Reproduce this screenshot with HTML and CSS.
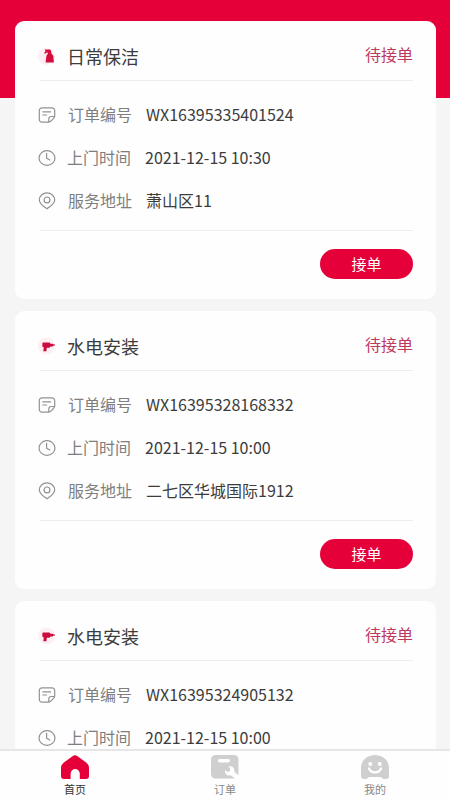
FILE: index.html
```
<!DOCTYPE html>
<html lang="zh-CN">
<head>
  <meta charset="UTF-8">
  <meta name="viewport" content="width=device-width, initial-scale=1">
  <title>首页</title>
  <link rel="stylesheet" href="styles.css">
</head>
<body>
  <!-- shared icons -->
  <svg class="sprite">
    <symbol id="icon-spray" viewBox="0 0 22 22">
      <circle cx="9.5" cy="11.5" r="8.5" fill="#fef0f2"/>
      <path d="M7.600 4.600h4.600c1.200 0 1.800.6 2 1.600l.2 2.300 1.900 2.300.6 6.600H8.600l.8-6.600 1.500-2.300-.5-1.300-2.200 1.500-1.200-.5 1.500-1.900z" fill="#d40d3c"/>
    </symbol>
    <symbol id="icon-drill" viewBox="0 0 22 22">
      <circle cx="9.500" cy="11" r="8.500" fill="#fef0f2"/>
      <path d="M5.900 7.500h6.600l1 1.200h2.200l.5.600 1.700.3v.8l-1.700.4-.5.700h-2.200l-1 1.200H9.800l-.4 3.500H6.300l.5-3.600-1.500-1.100.1-3.200z" fill="#c90d3e"/>
    </symbol>
    <symbol id="icon-note" viewBox="0 0 18 18">
      <path d="M10.800 16.100H4a2.700 2.700 0 0 1-2.700-2.700V4.500A2.700 2.700 0 0 1 4 1.800h10a2.700 2.700 0 0 1 2.700 2.700v5.800c0 1-3.900 5.800-5.900 5.800zm0 0v-3.300c0-1.500.8-2.300 2.300-2.300h3.500M4.800 5.800h7.800M4.800 9h3.800"/>
    </symbol>
    <symbol id="icon-clock" viewBox="0 0 18 18">
      <ellipse cx="9" cy="9" rx="8" ry="7.300"/>
      <path d="M8.600 4.300v5l3.200 1.800"/>
    </symbol>
    <symbol id="icon-pin" viewBox="0 0 18 18">
      <path d="M9 16.900C6.500 14.800 1.300 11.800 1.300 7.900a7.700 7 0 0 1 15.400 0C16.700 11.800 11.500 14.800 9 16.900z"/>
      <circle cx="9" cy="7.900" r="2.900"/>
    </symbol>
  </svg>

  <div class="page">
    <div class="order-list">
      <div class="card">
        <div class="card-head">
          <svg class="type-icon"><use href="#icon-spray"/></svg>
          <span class="title">日常保洁</span>
          <span class="state">待接单</span>
        </div>
        <div class="rows">
          <div class="row"><svg class="row-icon"><use href="#icon-note"/></svg><span class="label">订单编号</span><span>WX16395335401524</span></div>
          <div class="row row-time"><svg class="row-icon"><use href="#icon-clock"/></svg><span class="label">上门时间</span><span>2021-12-15 10:30</span></div>
          <div class="row"><svg class="row-icon"><use href="#icon-pin"/></svg><span class="label">服务地址</span><span>萧山区11</span></div>
        </div>
        <div class="card-foot"><button class="btn">接单</button></div>
      </div>

      <div class="card">
        <div class="card-head">
          <svg class="type-icon"><use href="#icon-drill"/></svg>
          <span class="title">水电安装</span>
          <span class="state">待接单</span>
        </div>
        <div class="rows">
          <div class="row"><svg class="row-icon"><use href="#icon-note"/></svg><span class="label">订单编号</span><span>WX16395328168332</span></div>
          <div class="row row-time"><svg class="row-icon"><use href="#icon-clock"/></svg><span class="label">上门时间</span><span>2021-12-15 10:00</span></div>
          <div class="row"><svg class="row-icon"><use href="#icon-pin"/></svg><span class="label">服务地址</span><span>二七区华城国际1912</span></div>
        </div>
        <div class="card-foot"><button class="btn">接单</button></div>
      </div>

      <div class="card">
        <div class="card-head">
          <svg class="type-icon"><use href="#icon-drill"/></svg>
          <span class="title">水电安装</span>
          <span class="state">待接单</span>
        </div>
        <div class="rows">
          <div class="row"><svg class="row-icon"><use href="#icon-note"/></svg><span class="label">订单编号</span><span>WX16395324905132</span></div>
          <div class="row row-time"><svg class="row-icon"><use href="#icon-clock"/></svg><span class="label">上门时间</span><span>2021-12-15 10:00</span></div>
        </div>
      </div>
    </div>

    <div class="tabbar">
      <div class="tab active">
        <svg class="tab-icon" viewBox="0 0 28 24">
          <path d="M3.200 7.300 11.500 1.200a4.200 4.200 0 0 1 5 0l8.300 6.100Q28 9.700 28 12.500V21q0 3-3 3h-6.200v-5.300a4.600 4.600 0 0 0-9.200 0V24H3q-3 0-3-3v-8.500Q0 9.700 3.200 7.300z" fill="#e60039"/>
        </svg>
        <span>首页</span>
      </div>
      <div class="tab">
        <svg class="tab-icon" viewBox="0 0 28 24">
          <rect width="27.500" height="23.500" rx="4.500" fill="#cfcfcf"/>
          <rect x="7" y="4" width="12" height="3.600" rx="1.800" fill="#fff"/>
          <path d="M14 15.200l2.800 1.800 2.200-1 .2-2.600-1.700-1.900c3.600-.9 6.600 1.600 5.700 5l4.800 4.300V24h-3.500l-4.300-3.600c-3.600.9-6.800-1.600-6.200-5.200z" fill="#fff"/>
        </svg>
        <span>订单</span>
      </div>
      <div class="tab">
        <svg class="tab-icon" viewBox="0 0 28 24">
          <path d="M0 13.500C0 5.500 6 0 14 0s14 5.500 14 13.500V21q0 3-3 3h-1.500c-2.500 0-2.500-2-4.500-2H9c-2 0-2 2-4.500 2H3q-3 0-3-3z" fill="#cfcfcf"/>
          <circle cx="9.300" cy="9" r="2" fill="#fff"/>
          <circle cx="18.700" cy="9" r="2" fill="#fff"/>
          <path d="M8 13.500c2.300 5.200 9.700 5.200 12 0" fill="none" stroke="#fff" stroke-width="2.200" stroke-linecap="round"/>
        </svg>
        <span>我的</span>
      </div>
    </div>
  </div>
</body>
</html>
```
FILE: styles.css
```
* {
  box-sizing: border-box;
}

body {
  margin: 0;
  font-family: "Noto Sans CJK SC", sans-serif;
  color: #3c3c3c;
  background-color: #f6f5f6;
}

.sprite {
  display: none;
}

.page {
  display: flex;
  flex-direction: column;
  height: 800px;
  overflow: hidden;
}

.order-list {
  flex: 1;
  min-height: 0;
  overflow: hidden;
  padding: 21px 14px 0 15px;
  background: linear-gradient(#e60039 98px, #f6f5f6 98px);
}

.card {
  height: 277.500px;
  margin-bottom: 12.700px;
  padding: 0 23px;
  background-color: #fefefe;
  border-radius: 9px;
}

.card-head {
  display: flex;
  align-items: center;
  height: 60px;
  margin-left: 2px;
  padding-top: 11px;
  border-bottom: 1px solid #eee;
}

.type-icon {
  width: 22px;
  height: 22px;
  margin-left: -3px;
}

.title {
  margin-left: 8px;
  font-size: 18px;
}

.state {
  margin: -4px 0 0 auto;
  font-size: 16px;
  color: #bd3860;
}

.rows {
  padding-top: 12px;
}

.row {
  display: flex;
  align-items: center;
  height: 43.300px;
  font-size: 16px;
  line-height: 22px;
}

.row span {
  padding-bottom: 2px;
}

.row-icon {
  width: 18px;
  height: 18px;
  margin-right: 12px;
  fill: none;
  stroke: #929292;
  stroke-width: 1.200;
  stroke-linecap: round;
  stroke-linejoin: round;
}

.label {
  margin-right: 14px;
  color: #7e7e7e;
}

.row-time .row-icon {
  margin-right: 11px;
}

.card-foot {
  display: flex;
  justify-content: flex-end;
  margin: 7px 0 0 2px;
  padding-top: 18px;
  border-top: 1px solid #eee;
}

.btn {
  width: 93px;
  height: 30px;
  padding: 0;
  border: none;
  border-radius: 15px;
  font-family: inherit;
  font-size: 15px;
  line-height: 30px;
  color: #fff;
  background-color: #e60039;
}

.tabbar {
  display: flex;
  height: 51px;
  border-top: 2px solid #e6e6e6;
  background-color: #fefefe;
}

.tab {
  flex: 1;
  display: flex;
  flex-direction: column;
  align-items: center;
  padding-top: 4px;
  font-size: 11px;
  line-height: 16px;
  color: #888;
}

.tab.active {
  color: #333;
}

.tab-icon {
  width: 28px;
  height: 24px;
  margin-bottom: 2px;
}
```
